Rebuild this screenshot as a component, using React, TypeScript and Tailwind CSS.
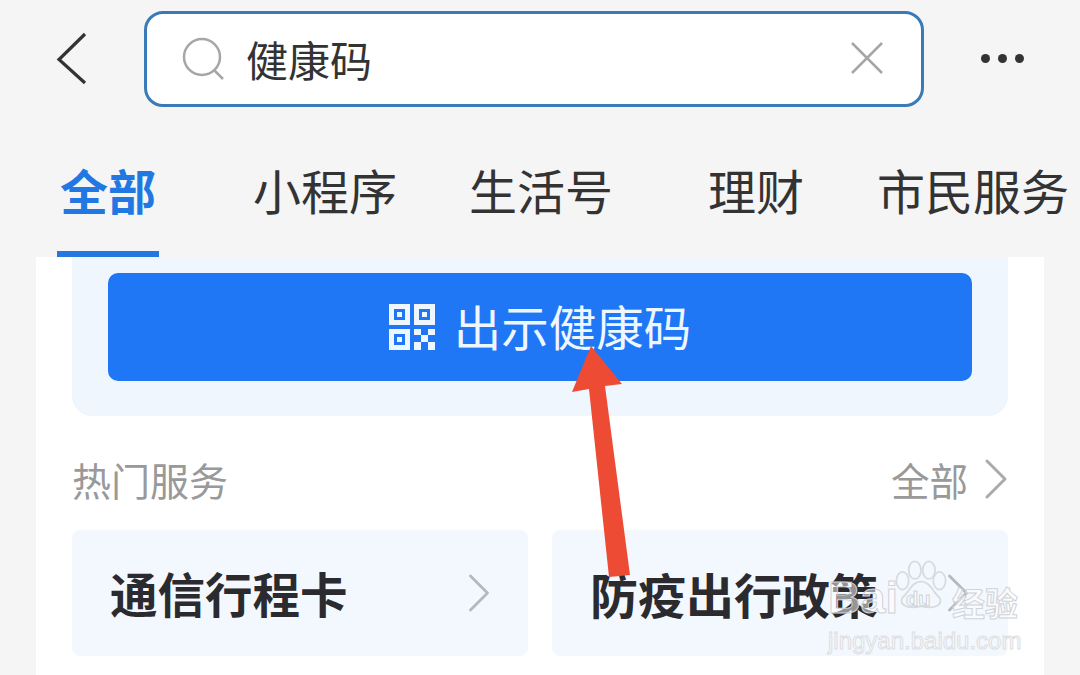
import { ChevronRight } from "lucide-react";

const tabs = [
  { label: "小程序", cls: "w-[144px] ml-[94px]" },
  { label: "生活号", cls: "w-[144px] ml-[72px]" },
  { label: "理财", cls: "w-[96px] ml-[95px]" },
  { label: "市民服务", cls: "w-[190px] ml-[73px] text-[47.5px]" },
];

const QrIcon = () => (
  <svg width="46" height="46" viewBox="0 0 46 46" className="shrink-0">
    <g fill="none" stroke="#eef6ff" strokeWidth="5">
      <rect x="2.5" y="2.5" width="16" height="16" />
      <rect x="27.5" y="2.5" width="16" height="16" />
      <rect x="2.5" y="27.5" width="16" height="16" />
    </g>
    <g fill="#eef6ff">
      <rect x="8" y="8" width="5" height="5" />
      <rect x="33" y="8" width="5" height="5" />
      <rect x="8" y="33" width="5" height="5" />
      <rect x="25" y="25" width="7" height="6" />
      <rect x="39" y="25" width="7" height="6" />
      <rect x="32" y="31" width="7" height="7" />
      <rect x="25" y="38" width="7" height="8" />
      <rect x="39" y="38" width="7" height="8" />
    </g>
  </svg>
);

export default function App() {
  return (
    <div
      className="relative h-[675px] w-[1080px] overflow-hidden bg-[#f5f5f6]"
      style={{ fontFamily: '"Noto Sans CJK SC", "Noto Sans", sans-serif' }}
    >
      {/* top search bar */}
      <div className="flex items-center pt-[11px]">
        <svg width="36" height="56" viewBox="0 0 36 56" className="ml-[54px] shrink-0">
          <path d="M31 3 L5 28.5 L31 52" fill="none" stroke="#333" strokeWidth="3.2" />
        </svg>
        <div className="ml-[54px] flex h-[96px] w-[780px] items-center rounded-[19px] border-[3px] border-[#3b7ab8] bg-white pl-[35px]">
          <svg width="44" height="44" viewBox="0 0 44 44" className="shrink-0">
            <circle cx="20" cy="20" r="18" fill="none" stroke="#a6a6a6" strokeWidth="2.5" />
            <path d="M32 33 L41 42" fill="none" stroke="#a6a6a6" strokeWidth="2.5" />
          </svg>
          <span className="ml-[20px] mb-[1px] text-[42px] leading-none text-[#333]">健康码</span>
          <svg width="32" height="32" viewBox="0 0 32 32" className="ml-[479px] mb-[2px] shrink-0">
            <path d="M1 1 L31 31 M31 1 L1 31" fill="none" stroke="#a6a6a6" strokeWidth="2.5" />
          </svg>
        </div>
        <div className="ml-[57px] mb-[2px] flex gap-[8px]">
          <span className="h-[9px] w-[9px] rounded-full bg-[#333]" />
          <span className="h-[9px] w-[9px] rounded-full bg-[#333]" />
          <span className="h-[9px] w-[9px] rounded-full bg-[#333]" />
        </div>
      </div>

      {/* tabs */}
      <div className="mt-[33px] flex h-[117px] pl-[57px]">
        <div className="flex h-[117px] w-[102px] flex-col items-center border-b-[6px] border-[#2477e0] pt-[25px]">
          <span className="text-[48px] leading-none font-bold text-[#2278e2]">全部</span>
        </div>
        {tabs.map((tab) => (
          <div key={tab.label} className={`pt-[25px] text-[48px] leading-none whitespace-nowrap text-[#333] ${tab.cls}`}>
            {tab.label}
          </div>
        ))}
      </div>

      {/* content sheet */}
      <div className="mx-[36px] h-[418px] bg-white px-[36px]">
        <div className="rounded-b-[20px] bg-[#eff6fe] px-[36px] pt-[16px] pb-[35px]">
          <div className="flex h-[108px] items-center justify-center gap-[19px] rounded-[10px] bg-[#1f77f5]">
            <QrIcon />
            <span className="mb-[3px] text-[47.5px] leading-none text-[#eef6ff]">出示健康码</span>
          </div>
        </div>

        <div className="mt-[41px] flex h-[44px] items-center justify-between">
          <span className="text-[39px] leading-none text-[#999]">热门服务</span>
          <div className="flex items-center text-[#999]">
            <span className="text-[38.5px] leading-none">全部</span>
            <ChevronRight size={72} strokeWidth={1} className="-my-[14px] -mr-[24px] -ml-[8px] text-[#aaa]" />
          </div>
        </div>

        <div className="mt-[29px] flex gap-[24px]">
          <div className="flex h-[126px] w-[456px] items-center rounded-lg bg-[#f3f8fe] pl-[38px]">
            <span className="text-[47.5px] leading-none font-bold text-[#2b2b2f]">通信行程卡</span>
            <ChevronRight size={68} strokeWidth={1} className="ml-[97px] text-[#b5b9be]" />
          </div>
          <div className="flex h-[126px] w-[456px] items-center rounded-lg bg-[#f3f8fe] pl-[38px]">
            <span className="text-[48px] leading-none font-bold whitespace-nowrap text-[#2b2b2f]">防疫出行政策</span>
            <ChevronRight size={68} strokeWidth={1} className="ml-[46px] text-[#b5b9be]" />
          </div>
        </div>
      </div>

      {/* red annotation arrow */}
      <svg width="70" height="240" viewBox="0 0 70 240" className="absolute top-[345px] left-[565px]">
        <path d="M26 1 L57 39 L40 41 L65 230 L44 232 L24 44 L7 47 Z" fill="#ee4b35" />
      </svg>

      {/* watermark */}
      <div className="absolute top-[560px] left-[828px] flex flex-col items-start">
        <div className="flex h-[60px] items-end leading-none">
          <span className="w-[64px] text-[45px] font-bold whitespace-nowrap text-white/50 [-webkit-text-stroke:1px_#d0d3d7]" style={{ fontFamily: '"Liberation Sans", sans-serif' }}>
            Bai
          </span>
          <div className="relative h-[52px] w-[58px] self-start">
            <svg width="58" height="52" viewBox="0 0 66 58">
              <g fill="none" stroke="#d8dadd" strokeWidth="2">
                <ellipse cx="12" cy="23" rx="7" ry="10" />
                <ellipse cx="26" cy="11" rx="7" ry="10" />
                <ellipse cx="42" cy="11" rx="7" ry="10" />
                <ellipse cx="54" cy="23" rx="7" ry="10" />
                <path d="M33 24 C22 24 20 36 12 42 C8 50 16 56 33 52 C50 56 58 50 54 42 C46 36 44 24 33 24 Z" />
              </g>
            </svg>
            <span className="absolute top-[29px] left-[14px] text-[20px] leading-none font-bold text-white/50 [-webkit-text-stroke:1px_#d0d3d7]" style={{ fontFamily: '"Liberation Sans", sans-serif' }}>
              du
            </span>
          </div>
          <span className="mb-[1px] ml-[2px] text-[33px] font-bold text-white/50 [-webkit-text-stroke:1px_#d0d3d7]">经验</span>
        </div>
        <span className="mt-[9px] text-[24px] leading-none text-white/50 [-webkit-text-stroke:1px_#dcdee1]" style={{ fontFamily: '"Liberation Sans", sans-serif' }}>
          jingyan.baidu.com
        </span>
      </div>
    </div>
  );
}
